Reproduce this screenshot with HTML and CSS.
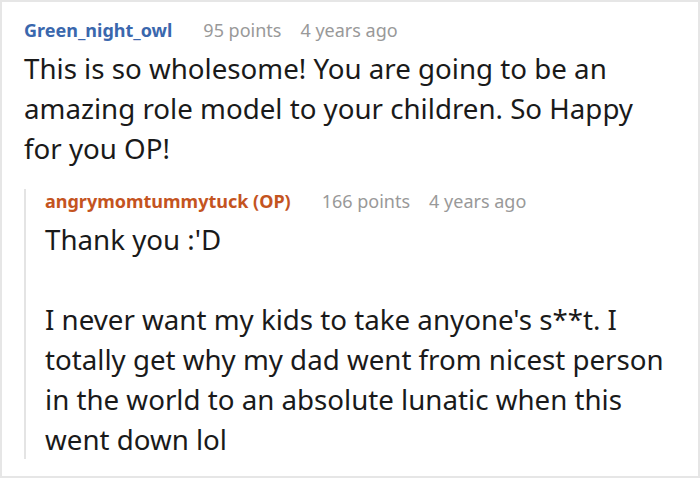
FILE: index.html
```html
<!DOCTYPE html>
<html>
<head>
<meta charset="utf-8">
<link rel="stylesheet" href="styles.css">
</head>
<body>
<div class="frame">
  <div class="comment">
    <div class="meta">
      <span class="author">Green_night_owl</span>
      <span class="info">95 points</span>
      <span class="info">4 years ago</span>
    </div>
    <div class="text">This is so wholesome! You are going to be an amazing role model to your children. So Happy for you OP!</div>
    <div class="reply">
      <div class="meta">
        <span class="author op">angrymomtummytuck (OP)</span>
        <span class="info">166 points</span>
        <span class="info">4 years ago</span>
      </div>
      <div class="text">
        <p>Thank you :'D</p>
        <p>I never want my kids to take anyone's s**t. I totally get why my dad went from nicest person in the world to an absolute lunatic when this went down lol</p>
      </div>
    </div>
  </div>
</div>
</body>
</html>
```

FILE: styles.css
```css
html, body {
  margin: 0;
  padding: 0;
  background: #fff;
}
body {
  font-family: "Noto Sans", "Open Sans", sans-serif;
  color: #1a1a1a;
}
.frame {
  box-sizing: border-box;
  width: 700px;
  height: 478px;
  border: 2px solid #e6e6e6;
  overflow: hidden;
}
.comment {
  padding: 16px 0 0 22px;
}
.meta {
  display: flex;
  gap: 19px;
  font-size: 18px;
  line-height: 24px;
  align-items: baseline;
}
.author {
  font-weight: bold;
  color: #3a67ad;
  margin-right: 12px;
}
.author.op {
  color: #c4541f;
}
.info {
  color: #999;
}
.text {
  font-size: 27.7px;
  line-height: 40px;
  padding-top: 6px;
  width: 640px;
}
.text p {
  margin: 0 0 40px 0;
}
.text p:last-child {
  margin-bottom: 0;
}
.reply {
  margin-top: 21px;
  border-left: 2px solid #e4e4e4;
  padding-left: 19px;
}
.reply .text {
  width: 630px;
}
```
